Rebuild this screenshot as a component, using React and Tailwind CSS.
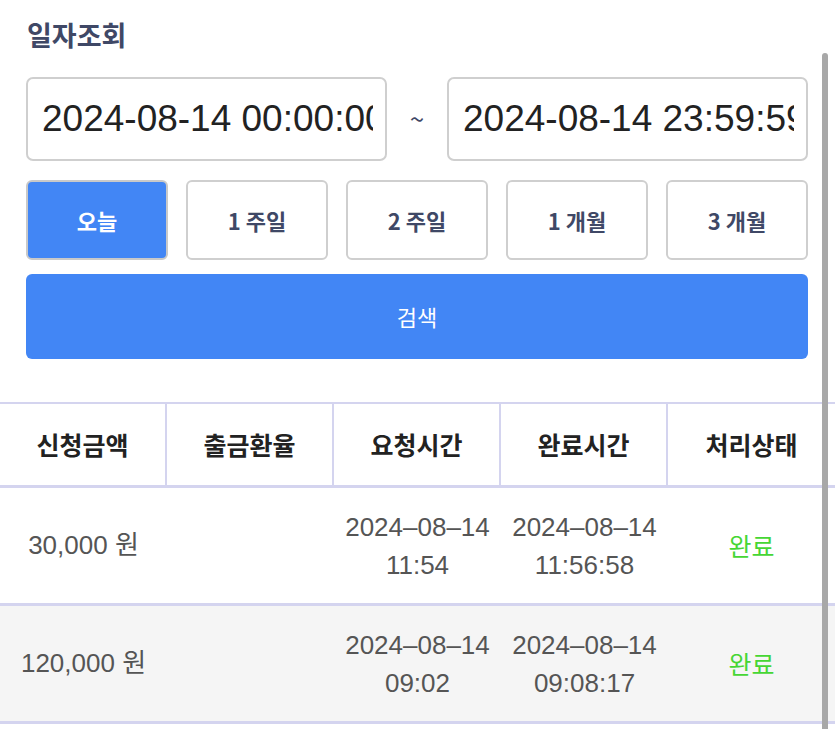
import React from "react";

const ranges = ["오늘", "1 주일", "2 주일", "1 개월", "3 개월"];
const rows = [
  { amount: "30,000 원", req: ["2024–08–14", "11:54"], done: ["2024–08–14", "11:56:58"], bg: "bg-white" },
  { amount: "120,000 원", req: ["2024–08–14", "09:02"], done: ["2024–08–14", "09:08:17"], bg: "bg-[#f5f5f5]" },
];
const heads = ["신청금액", "출금환율", "요청시간", "완료시간", "처리상태"];

export default function App() {
  return (
    <div
      className="relative w-[835px] h-[729px] overflow-hidden bg-white"
      style={{ fontFamily: '"Noto Sans CJK KR", "Noto Sans", sans-serif' }}
    >
      <div className="pl-[26px] pr-[27px] pt-[16px]">
        <h2 className="text-[27px] leading-[38px] font-bold text-[#3f4866] pl-[1px]">일자조회</h2>

        <div className="mt-[23px] flex items-center justify-between">
          <div className="w-[361px] h-[84px] border-2 border-[#cfcfcf] rounded-[7px] flex items-center overflow-hidden pl-[14px] pr-[12px]">
            <span
              className="block whitespace-nowrap overflow-hidden text-[37px] text-[#222222] w-full"
              style={{ fontFamily: '"Liberation Sans", Arial, sans-serif' }}
            >
              2024-08-14 00:00:00
            </span>
          </div>
          <span className="text-[26px] text-[#3f4866] leading-none -mt-[2px]">~</span>
          <div className="w-[361px] h-[84px] border-2 border-[#cfcfcf] rounded-[7px] flex items-center overflow-hidden pl-[14px] pr-[12px]">
            <span
              className="block whitespace-nowrap overflow-hidden text-[37px] text-[#222222] w-full"
              style={{ fontFamily: '"Liberation Sans", Arial, sans-serif' }}
            >
              2024-08-14 23:59:59
            </span>
          </div>
        </div>

        <div className="mt-[19px] flex justify-between">
          {ranges.map((r, i) => (
            <button
              key={r}
              className={
                i === 0
                  ? "w-[142px] h-[80px] rounded-[6px] border-2 border-[#c9c9c9] bg-[#4286f5] text-white text-[22px] font-bold"
                  : "w-[142px] h-[80px] rounded-[6px] border-2 border-[#cfcfcf] bg-white text-[#3f4866] text-[22px] font-bold"
              }
            >
              {r}
            </button>
          ))}
        </div>

        <button className="mt-[14px] w-full h-[85px] rounded-[6px] bg-[#4286f5] text-white text-[22px]">
          검색
        </button>
      </div>

      <div className="mt-[43px] w-[835px] border-t-2 border-[#d4d4ef]">
        <div className="grid grid-cols-5 h-[84px] border-b-[3px] border-[#d4d4ef]">
          {heads.map((h, i) => (
            <div
              key={h}
              className={
                "flex items-center justify-center text-[25px] font-bold text-[#222222] " +
                (i < 4 ? "border-r-2 border-[#d4d4ef]" : "")
              }
            >
              {h}
            </div>
          ))}
        </div>
        {rows.map((r, idx) => (
          <div
            key={idx}
            className={"grid grid-cols-5 h-[118px] border-b-[3px] border-[#d4d4ef] text-[26px] text-[#555555] " + r.bg}
            style={{ fontFamily: '"Liberation Sans", "Noto Sans CJK KR", sans-serif' }}
          >
            <div className="flex items-center justify-center">{r.amount}</div>
            <div />
            <div className="flex flex-col items-center justify-center leading-[38px]">
              <span>{r.req[0]}</span>
              <span>{r.req[1]}</span>
            </div>
            <div className="flex flex-col items-center justify-center leading-[38px]">
              <span>{r.done[0]}</span>
              <span>{r.done[1]}</span>
            </div>
            <div
              className="flex items-center justify-center text-[#46d634] text-[25px]"
              style={{ fontFamily: '"Noto Sans CJK KR", sans-serif' }}
            >
              완료
            </div>
          </div>
        ))}
      </div>

      <div className="absolute right-[7px] top-[53px] bottom-0 w-[6px] rounded-t-full bg-[#a8a8a8]" />
    </div>
  );
}
